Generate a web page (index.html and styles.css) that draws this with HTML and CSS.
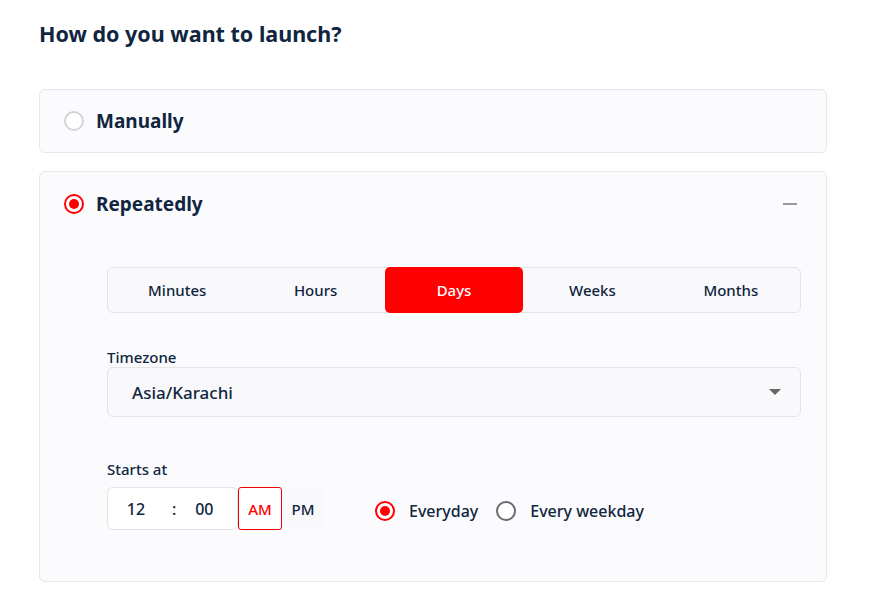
FILE: index.html
```html
<!DOCTYPE html>
<html lang="en">
<head>
    <meta charset="UTF-8">
    <title>Launch settings</title>
    <link rel="stylesheet" href="styles.css">
</head>
<body>
    <h1 class="title">How do you want to launch?</h1>

    <div class="option-card">
        <div class="option-head">
            <span class="radio"></span>
            <span class="option-name">Manually</span>
        </div>
    </div>

    <div class="option-card open">
        <div class="option-head">
            <span class="radio checked"></span>
            <span class="option-name">Repeatedly</span>
            <span class="collapse"></span>
        </div>
        <div class="option-body">
            <div class="tabs">
                <div class="tab">Minutes</div>
                <div class="tab">Hours</div>
                <div class="tab active">Days</div>
                <div class="tab">Weeks</div>
                <div class="tab">Months</div>
            </div>

            <label class="field-label">Timezone</label>
            <div class="select">
                <span>Asia/Karachi</span>
                <span class="caret"></span>
            </div>

            <label class="field-label starts">Starts at</label>
            <div class="time-row">
                <div class="time-box">
                    <span class="num">12</span>
                    <span class="sep">:</span>
                    <span class="num">00</span>
                </div>
                <div class="ampm active">AM</div>
                <div class="ampm">PM</div>
                <div class="choice">
                    <span class="radio small checked"></span>
                    <span>Everyday</span>
                </div>
                <div class="choice">
                    <span class="radio small dark"></span>
                    <span>Every weekday</span>
                </div>
            </div>
        </div>
    </div>
</body>
</html>
```

FILE: styles.css
```css
body { margin: 0; padding: 18px 42px 0 39px; font-family: "Noto Sans", "Open Sans", sans-serif; color: #0f2540; background: #fff; }
.title { margin: 0 0 39px; font-size: 21.5px; font-weight: 700; line-height: 32px; }
.option-card { background: #fbfbfd; border: 1px solid #e6e6eb; border-radius: 6px; margin-bottom: 18px; }
.option-head { display: flex; align-items: center; height: 62px; padding: 0 24px; }
.option-card.open .option-head { height: 64px; }
.option-name { font-size: 19px; font-weight: 700; margin-left: 12px; }
.radio { width: 16px; height: 16px; border: 2px solid #d4d4d8; border-radius: 50%; background: #fff; display: inline-block; box-sizing: content-box; position: relative; }
.radio.checked { border-color: #f00; }
.radio.checked::after { content: ""; position: absolute; left: 3px; top: 3px; width: 10px; height: 10px; border-radius: 50%; background: #f00; }
.radio.dark { border-color: #6b6b70; }
.collapse { margin-left: auto; margin-right: 5px; width: 14px; height: 2px; background: #9a9a9e; }
.option-body { padding: 31px 25px 51px 67px; }
.tabs { display: flex; background: #f9f9fb; border: 1px solid #e3e3e8; border-radius: 6px; height: 44px; }
.tab { flex: 1; display: flex; align-items: center; justify-content: center; font-size: 15px; font-weight: 500; }
.tab.active { background: #f00; color: #fff; border-radius: 5px; margin: -1px 0; }
.field-label { display: block; font-size: 15px; font-weight: 500; margin-top: 34px; line-height: 20px; }
.field-label.starts { margin-top: 42px; }
.select { display: flex; align-items: center; justify-content: space-between; height: 48px; padding: 0 19px 0 24px; background: #f9f9fb; border: 1px solid #e3e3e8; border-radius: 6px; font-size: 17px; font-weight: 500; }
.caret { width: 0; height: 0; border-left: 6px solid transparent; border-right: 6px solid transparent; border-top: 6px solid #666; }
.time-row { display: flex; align-items: center; margin-top: 8px; }
.time-box { display: flex; align-items: center; width: 129px; height: 41px; border: 1px solid #e3e3e8; border-radius: 6px; background: #fff; font-size: 16px; font-weight: 500; }
.time-box .num { width: 20px; text-align: center; }
.time-box .num:first-child { margin-left: 18px; }
.time-box .sep { margin: 0 18px 0 26px; }
.ampm { display: flex; align-items: center; justify-content: center; width: 42px; height: 41px; font-size: 15px; font-weight: 500; background: #f9f9fb; }
.ampm.active { color: #f00; border: 1px solid #e00; border-radius: 3px; background: #fff; }
.choice { display: flex; align-items: center; font-size: 16px; font-weight: 500; margin-left: 51px; padding-top: 5px; }
.choice + .choice { margin-left: 18px; }
.choice .radio { margin-right: 14px; }
```
